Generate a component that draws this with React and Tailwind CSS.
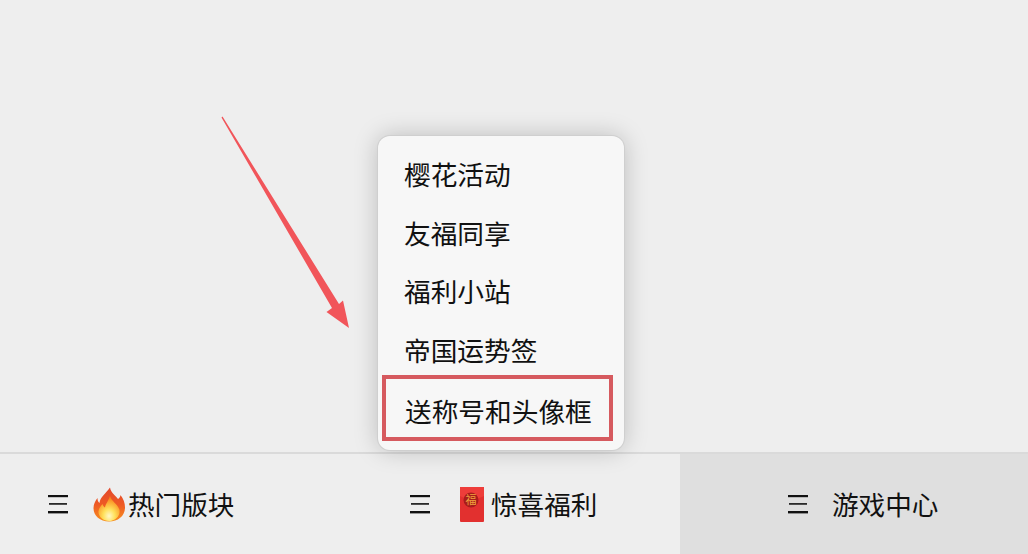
const cjk = "font-['Noto_Sans_CJK_SC','Liberation_Sans',sans-serif]";

const menuItems = ['樱花活动', '友福同享', '福利小站', '帝国运势签'];

function MenuIcon() {
  return (
    <svg width="20" height="20" viewBox="0 0 20 20" className="shrink-0">
      <rect x="0" y="1" width="20" height="2.2" fill="#111" />
      <rect x="1" y="9" width="18" height="1.8" fill="#2a2a2a" />
      <rect x="0" y="17" width="20" height="2.4" fill="#111" />
    </svg>
  );
}

function Flame() {
  return (
    <svg width="32" height="35" viewBox="0 0 32 35" className="shrink-0">
      <defs>
        <linearGradient id="flameOuter" x1="0" y1="0" x2="0" y2="1">
          <stop offset="0" stopColor="#e2472c" />
          <stop offset="0.5" stopColor="#ee5a24" />
          <stop offset="1" stopColor="#f78f1e" />
        </linearGradient>
        <radialGradient id="flameInner" cx="0.5" cy="0.8" r="0.7">
          <stop offset="0" stopColor="#fff8c8" />
          <stop offset="0.4" stopColor="#ffe05a" />
          <stop offset="1" stopColor="#f9861c" />
        </radialGradient>
      </defs>
      <path
        d="M17 0.5C18 6 22 8 25 12C27 10.5 27.5 9 27.5 8C30.5 12 32 16 32 20.5C32 29 25 34.5 16 34.5C7 34.5 0.5 29 0.5 21C0.5 17 2.5 13.5 4.5 11C4.5 13 5 15 6.5 16C7 10 12.5 7 17 0.5Z"
        fill="url(#flameOuter)"
      />
      <path
        d="M17 9C18 14 25 17 26.5 23C27.5 29 22 34 16 34C10 34 5 29.5 5.5 24C6 21 8 19 9.5 17C10 19 11 20 12 20.5C12.5 16.5 15.5 14 17 9Z"
        fill="url(#flameInner)"
      />
    </svg>
  );
}

function RedPacket() {
  return (
    <svg width="24" height="35" viewBox="0 0 24 35" className="shrink-0">
      <rect x="0" y="0" width="24" height="35" rx="1" fill="#e2302f" />
      <path d="M0 0H24V9C17 13 7 13 0 9Z" fill="#ee3d3a" />
      <circle cx="11" cy="13" r="7.5" fill="#a81c1c" />
      <text x="11" y="17" textAnchor="middle" fontSize="11" fill="#f0a23c" fontFamily="Noto Sans CJK SC">福</text>
    </svg>
  );
}

export default function App() {
  return (
    <div className={`relative flex h-[554px] w-[1028px] flex-col overflow-hidden bg-[#eeeeee] text-[#111111] ${cjk}`}>
      <div className="flex-1" />

      <div className="flex h-[102px] border-t-2 border-[#dadada] text-[26.6px] leading-none">
        <div className="flex w-[340px] items-center pl-[48px]">
          <MenuIcon />
          <span className="ml-[25px]"><Flame /></span>
          <span className="ml-[3px]">热门版块</span>
        </div>
        <div className="flex w-[340px] items-center pl-[70px]">
          <MenuIcon />
          <span className="ml-[30px]"><RedPacket /></span>
          <span className="ml-[7px]">惊喜福利</span>
        </div>
        <div className="flex flex-1 items-center bg-[#dfdfdf] pl-[108px]">
          <MenuIcon />
          <span className="ml-[24px]">游戏中心</span>
        </div>
      </div>

      {/* popup over the tab bar */}
      <div className="absolute left-[378px] top-[136px] h-[314px] w-[246px] rounded-[12px] bg-[#f7f7f7] pt-[10px] text-[26.7px] leading-none shadow-[0_0_24px_rgba(0,0,0,0.22)] ring-1 ring-[#cfcfcf]">
        {menuItems.map((item) => (
          <div key={item} className="flex h-[58.5px] items-center pl-[26px] pb-[1px]">{item}</div>
        ))}
        <div className="-mt-[5px] ml-[4px] flex h-[66px] w-[231px] items-center border-4 border-[#d65a5f] pl-[19px] pt-[6px]">
          送称号和头像框
        </div>
      </div>

      {/* red annotation arrow */}
      <svg className="absolute left-0 top-0 pointer-events-none" width="1028" height="554">
        <polygon points="221.5,117.5 222.5,116.5 339,304 343,300.5 349,328 326.5,312 332,308" fill="#f1555a" />
      </svg>
    </div>
  );
}
